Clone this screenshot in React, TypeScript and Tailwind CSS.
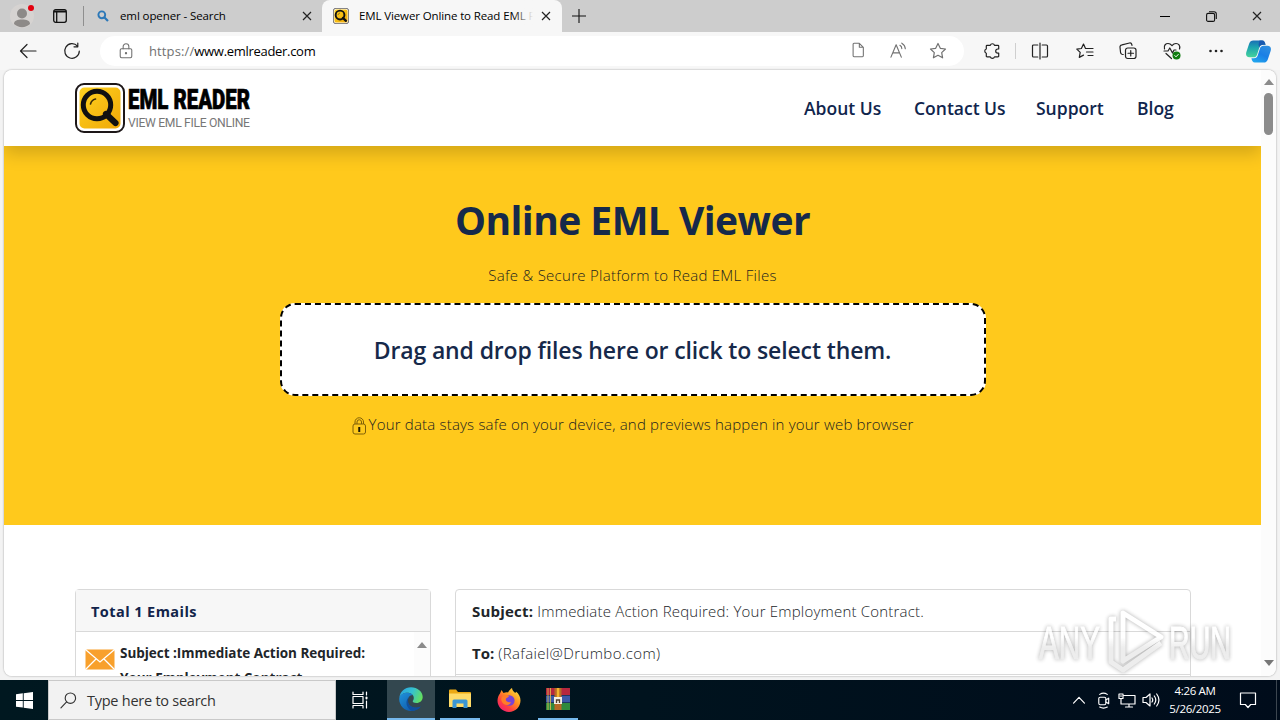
import React from "react";

const navLinks = [
  { label: "About Us", className: "w-[78px] mr-8" },
  { label: "Contact Us", className: "w-[90px] mr-8" },
  { label: "Support", className: "w-[69px] mr-8" },
  { label: "Blog", className: "w-[38px]" },
];

const Icon = ({
  size = 18,
  className = "",
  stroke = 1.2,
  children,
}: {
  size?: number;
  className?: string;
  stroke?: number;
  children: React.ReactNode;
}) => (
  <svg
    width={size}
    height={size}
    viewBox="0 0 18 18"
    fill="none"
    stroke="currentColor"
    strokeWidth={stroke}
    strokeLinecap="round"
    strokeLinejoin="round"
    className={`shrink-0 ${className}`}
  >
    {children}
  </svg>
);

const CloseIcon = () => (
  <svg width="10" height="10" viewBox="0 0 10 10" fill="none" stroke="#222" strokeWidth="1.2" className="shrink-0">
    <path d="M1 1l8 8M9 1l-8 8" />
  </svg>
);

const Magnifier = ({ size, id, ring = 4.6 }: { size: number; id: string; ring?: number }) => (
  <svg width={size} height={size} viewBox="0 0 50 50" className="shrink-0">
    <defs>
      <linearGradient id={id} x1="0" y1="0" x2="1" y2="1">
        <stop offset="0" stopColor="#ffd21f" />
        <stop offset="1" stopColor="#efa808" />
      </linearGradient>
    </defs>
    <rect x="1" y="1" width="48" height="48" rx="8" fill="#fff" stroke="#1d1718" strokeWidth="2" />
    <rect x="4.5" y="4.5" width="41" height="41" rx="5" fill={`url(#${id})`} />
    <circle cx="22" cy="22" r="13.7" fill="none" stroke="#111" strokeWidth={ring} />
    <path d="M31 31L40.500 40" stroke="#111" strokeWidth={ring + 1.2} strokeLinecap="round" />
    <path d="M15.500 21a7 7 0 015-5" fill="none" stroke="#3a2c08" strokeWidth="1.6" strokeLinecap="round" />
  </svg>
);

const TabStrip = () => (
  <div className="flex h-8 w-full bg-[#cdcdcd]">
    <div className="flex w-11 items-center justify-center">
      <svg width="26" height="24" viewBox="0 0 26 24">
        <circle cx="13" cy="12" r="12" fill="#d6d3d1" />
        <circle cx="13" cy="9.5" r="5" fill="#8d8a88" />
        <path d="M5 20c0-3.500 3.500-4.500 8-4.500s8 1 8 4.500c-2 2-5 3.200-8 3.200s-6-1.200-8-3.200z" fill="#8d8a88" />
        <circle cx="22" cy="4" r="3" fill="#e3000f" />
      </svg>
    </div>
    <div className="flex w-8 items-center justify-center">
      <svg width="14" height="14" viewBox="0 0 14 14" fill="none" stroke="#111" strokeWidth="1.3">
        <rect x=".7" y=".7" width="12.600" height="12.600" rx="2" />
        <path d="M1 2.500h12" strokeWidth="2" />
        <path d="M3.700 3v10" />
      </svg>
    </div>
    <div className="flex w-[246px] items-center pl-[7px]">
      <span className="h-5 w-px bg-[#8f8f8f]" />
      <svg width="12" height="12" viewBox="0 0 12 12" fill="none" stroke="#2c78b8" className="ml-[13px] shrink-0">
        <circle cx="4.800" cy="4.800" r="3.400" strokeWidth="1.900" />
        <path d="M7.500 7.500l3.500 3.500" strokeWidth="2.200" />
      </svg>
      <span className="ml-[11px] w-[182px] whitespace-nowrap text-[11.500px] leading-8 tracking-[-0.100px]">
        eml opener - Search
      </span>
      <CloseIcon />
    </div>
    <div className="flex w-60 items-center rounded-t-lg bg-[#f7f7f7] pl-[11px]">
      <Magnifier size={16} id="tabFill" ring={6} />
      <span className="relative ml-[10px] w-[174px] overflow-hidden whitespace-nowrap text-[11.500px] leading-8 tracking-[-0.120px]">
        EML Viewer Online to Read EML Files
        <span className="absolute right-0 top-0 h-8 w-5 bg-gradient-to-r from-[#f7f7f7]/0 to-[#f7f7f7]" />
      </span>
      <span className="ml-[8px] flex">
        <CloseIcon />
      </span>
    </div>
    <div className="flex w-[34px] items-center justify-center">
      <svg width="14" height="14" viewBox="0 0 14 14" stroke="#111" strokeWidth="1.100">
        <path d="M7 0v14M0 7h14" />
      </svg>
    </div>
    <div className="ml-auto flex">
      <div className="flex w-[46px] items-center justify-center">
        <span className="h-px w-[10px] bg-black" />
      </div>
      <div className="flex w-[46px] items-center justify-center">
        <svg width="11" height="11" viewBox="0 0 11 11" fill="none" stroke="#111" strokeWidth="1.100">
          <rect x=".6" y="2.400" width="8" height="8" rx="1.500" />
          <path d="M3 .7h5a2.300 2.300 0 012.300 2.300v5" />
        </svg>
      </div>
      <div className="flex w-[46px] items-center justify-center">
        <CloseIcon />
      </div>
    </div>
  </div>
);

const Toolbar = () => (
  <div className="flex h-[38px] w-full items-center bg-[#f7f7f7] text-[#222]">
    <div className="flex w-14 justify-center">
      <Icon>
        <path d="M17 9H1.500M8 2.500L1.500 9 8 15.500" />
      </Icon>
    </div>
    <div className="flex w-8 justify-center">
      <Icon>
        <path d="M16.300 9A7.300 7.300 0 1114.500 4.200M14.800 1v3.800H11" />
      </Icon>
    </div>
    <div className="ml-3 flex h-[30px] w-[864px] items-center rounded-full bg-white pl-[18px] text-[#717171]">
      <Icon size={16}>
        <rect x="2.500" y="6.500" width="13" height="10" rx="1.500" />
        <path d="M5.800 6.500V4a3.200 3.200 0 016.400 0v2.500" />
        <circle cx="9" cy="11.500" r=".7" fill="currentColor" />
      </Icon>
      <span className="ml-[15px] whitespace-nowrap pt-px text-[13px]">
        <span className="tracking-[0.120px]">https://</span>
        <span className="tracking-[-0.300px] text-black">www.emlreader.com</span>
      </span>
      <div className="ml-auto mr-[6px] flex">
        <div className="flex w-10 justify-center">
          <Icon size={16}>
            <path d="M3.500 2.500a1 1 0 011-1h6l4.500 4.500v9.500a1 1 0 01-1 1H4.500a1 1 0 01-1-1zM10.500 1.500V6H15" />
          </Icon>
        </div>
        <div className="flex w-10 justify-center">
          <Icon size={17}>
            <path d="M1 16L6.500 3 12 16M3 11.500h7M10.500 3.500q2 1.200 2 3.500M12.500 1.200q3.500 2 3.700 6" />
          </Icon>
        </div>
        <div className="flex w-10 justify-center">
          <Icon size={18}>
            <path d="M9 1.500l2.300 4.800 5.200.7-3.800 3.600.9 5.200L9 13.300l-4.600 2.500.9-5.200L1.500 7l5.200-.7z" />
          </Icon>
        </div>
      </div>
    </div>
    <div className="flex w-[51px] items-center justify-center pl-[4px]">
      <Icon>
        <path d="M4 3.300h3.300a2.200 2.200 0 014.200 0H15a.7.7 0 01.7.7v3h-.9a2.100 2.100 0 000 4.200h.9v3a.7.7 0 01-.7.700h-3.500a2.200 2.200 0 01-4.200 0H4a.7.7 0 01-.7-.7v-3a2.200 2.200 0 010-4.200V4a.7.7 0 01.7-.7z" />
      </Icon>
    </div>
    <span className="h-4 w-px bg-[#cfcfcf]" />
    <div className="flex w-[47px] justify-center">
      <Icon>
        <path d="M6.800 3H2.500a1 1 0 00-1 1v10a1 1 0 001 1h4.300M11.200 3h4.300a1 1 0 011 1v10a1 1 0 01-1 1h-4.300M9 1v16" />
      </Icon>
    </div>
    <div className="flex w-[43px] justify-center">
      <Icon>
        <path d="M11 6.500H9.500L7.500 2 5.400 6.500l-4.600.6 3.400 3.300-.9 5 4.200-2.300M11 6.500h6M10.500 10H17M12 13.500h5" />
      </Icon>
    </div>
    <div className="flex w-11 justify-center">
      <Icon>
        <rect x="6.500" y="6" width="10.500" height="10.500" rx="2.200" />
        <path d="M11.750 8.500v5.500M9 11.250h5.500M4.200 12.500A2.500 2.500 0 011.500 10L1 5.200A2.200 2.200 0 013 2.800L10.500 1a2 2 0 012.300 1.500l.2 1" />
      </Icon>
    </div>
    <div className="flex w-11 justify-center">
      <Icon>
        <path d="M1.500 7C.5 3 3 1.500 5 1.500c2 0 3.200 1.200 4 2.200.8-1 2-2.200 4-2.200 2.500 0 4.500 2 3.500 5.500M1 9h4l1.800-3 2.700 5 1.500-3h2M3 11.500l5.500 5" />
        <circle cx="13.500" cy="13.500" r="4" fill="#107c10" stroke="none" />
        <path d="M11.800 13.600l1.200 1.200 2.300-2.400" stroke="#fff" strokeWidth="1" />
      </Icon>
    </div>
    <div className="flex w-11 justify-center">
      <Icon>
        <g fill="currentColor" stroke="none">
          <circle cx="3.500" cy="9" r="1.300" />
          <circle cx="9" cy="9" r="1.300" />
          <circle cx="14.500" cy="9" r="1.300" />
        </g>
      </Icon>
    </div>
    <div className="flex w-[40px] justify-center">
      <svg width="25" height="23" viewBox="0 0 24 24" preserveAspectRatio="none">
        <defs>
          <linearGradient id="copA" x1="0.300" y1="0" x2="0.300" y2="1">
            <stop offset="0" stopColor="#1a6fb5" />
            <stop offset=".4" stopColor="#1ca3b0" />
            <stop offset="1" stopColor="#45d39c" />
          </linearGradient>
          <linearGradient id="copB" x1=".8" y1="0" x2=".2" y2="1">
            <stop offset="0" stopColor="#2f8fe0" />
            <stop offset=".5" stopColor="#1a7fe6" />
            <stop offset="1" stopColor="#22a7ee" />
          </linearGradient>
        </defs>
        <path d="M7 .5h8.500c2 0 2.800 2 3.300 4.500h-2.300c-2.200 0-3.200 1-3.800 3l-2 7c-.7 2-1.700 3-3.700 3H3.500C0 18-.5 15 .5 12L3 4C3.800 1.500 5 .5 7 .5z" fill="url(#copA)" />
        <path d="M13 .5h2.500c2 0 2.800 2 3.300 4.500h-2.300c-2.200 0-3.200 1-3.800 3L12 5z" fill="#1959b0" />
        <path d="M17 23.500H8.500c-2 0-2.800-2-3.300-4.500h2.300c2.200 0 3.200-1 3.800-3l2-7c.7-2 1.700-3 3.700-3h3.500C24 6 24.500 9 23.500 12L21 20c-.8 2.500-2 3.500-4 3.500z" fill="url(#copB)" />
      </svg>
    </div>
  </div>
);

const SiteHeader = () => (
  <header className="relative z-10 flex h-[76px] items-center bg-white pl-[71px] pr-[86px] shadow-[0_8px_16px_rgba(0,0,0,0.17)]">
    <Magnifier size={50} id="logoFill" ring={5} />
    <svg width="126" height="60" viewBox="0 -6 126 60" className="ml-[3px] overflow-visible">
      <text
        x="0"
        y="25"
        fontFamily="Roboto"
        fontWeight="900"
        fontSize="28.500"
        stroke="#000"
        strokeWidth=".7"
        textLength="122"
        lengthAdjust="spacingAndGlyphs"
      >
        EML READER
      </text>
      <text x="0" y="43" fontFamily="Roboto" fontSize="12.200" fill="#777" textLength="122">
        VIEW EML FILE ONLINE
      </text>
    </svg>
    <nav className="ml-auto flex pt-px text-[17.500px] font-semibold text-[#10254d]">
      {navLinks.map((link) => (
        <a key={link.label} className={`whitespace-nowrap ${link.className}`}>
          {link.label}
        </a>
      ))}
    </nav>
  </header>
);

const Hero = () => (
  <section className="flex h-[379px] flex-col items-center bg-[#ffc91c] text-[#16294a]">
    <h1 className="mt-[44px] whitespace-nowrap text-[39px] font-bold leading-[60px] tracking-[-0.550px]">
      Online EML Viewer
    </h1>
    <p className="mt-[13px] whitespace-nowrap text-[15px] font-light leading-6 tracking-[0.280px] text-[#1a1c1f]">
      Safe &amp; Secure Platform to Read EML Files
    </p>
    <div className="mt-4 flex h-[93px] w-[706px] items-center justify-center rounded-[15px] border-2 border-dashed border-black bg-white pt-px">
      <span className="whitespace-nowrap text-[23px] font-semibold tracking-[-0.130px]">
        Drag and drop files here or click to select them.
      </span>
    </div>
    <p className="mt-[16px] flex items-center whitespace-nowrap text-[15px] font-light leading-6 tracking-[0.190px] text-[#1a1c1f]">
      <svg width="15" height="18" viewBox="0 0 15 18" fill="none" stroke="#806008" className="mr-[2px] mt-[3px]">
        <rect x="1" y="7" width="12.500" height="10" rx="2" />
        <path d="M3 7V5a4.200 4.200 0 018.500 0v2M5 7V5a2.200 2.200 0 014.500 0v2" />
        <path d="M7.250 10v5" stroke="#1e1804" strokeWidth="2" />
      </svg>
      <span>Your data stays safe on your device, and previews happen in your web browser</span>
    </p>
  </section>
);

const Mails = () => (
  <section className="flex h-[151px] items-start gap-6 bg-white pl-[71px] pt-16 text-[#212529]">
    <div className="h-[200px] w-[356px] rounded-t border border-[#d9d9d9]">
      <div className="h-[42px] border-b border-[#d9d9d9] bg-[#f7f7f7] pl-[15px] text-[14.500px] font-bold leading-[43px] tracking-[0.430px] text-[#12244a]">
        Total 1 Emails
      </div>
      <div className="flex">
        <svg width="30" height="21" viewBox="0 0 30 21" className="ml-[9px] mt-[17px] shrink-0">
          <rect x=".5" y=".5" width="29" height="20" rx="1.500" fill="#f8a02c" />
          <path d="M1 1l14 12L29 1M1 20l10-10M29 20L19 10" fill="none" stroke="#fff" strokeWidth="1.300" />
        </svg>
        <p className="ml-[5px] mt-[9px] w-[290px] whitespace-nowrap text-[13.500px] font-bold leading-[25px] tracking-[-0.030px]">
          Subject :Immediate Action Required:
          <br />
          Your Employment Contract.
        </p>
        <div className="ml-auto flex w-[16px] justify-center bg-[#fcfcfc] pt-[10px]">
          <svg width="10" height="6" viewBox="0 0 10 6">
            <path d="M5 0l5 6H0z" fill="#8b8b8b" />
          </svg>
        </div>
      </div>
    </div>
    <div className="h-[200px] w-[736px] whitespace-nowrap rounded-t border border-[#d9d9d9] text-[15px] font-light">
      <div className="h-[42px] border-b border-[#d9d9d9] pl-4 leading-[43px] tracking-[0.200px]">
        <b className="font-bold">Subject:</b> Immediate Action Required: Your Employment Contract.
      </div>
      <div className="h-[43px] border-b border-[#d9d9d9] pl-4 leading-[43px]">
        <b className="font-bold">To:</b> <span className="tracking-[0.380px]">(Rafaiel@Drumbo.com)</span>
      </div>
    </div>
  </section>
);

const Scrollbar = () => (
  <div className="flex w-[15px] flex-col items-center bg-[#fcfcfc]">
    <svg width="10" height="6" viewBox="0 0 10 6" className="mt-[9px]">
      <path d="M5 0l5 6H0z" fill="#8b8b8b" />
    </svg>
    <span className="mt-[8px] h-[42px] w-[9px] rounded-full bg-[#8b8b8b]" />
    <svg width="10" height="6" viewBox="0 0 10 6" className="mb-[10px] mt-auto">
      <path d="M5 6l5-6H0z" fill="#777" />
    </svg>
  </div>
);

const Taskbar = () => (
  <div className="flex h-10 w-full items-stretch bg-gradient-to-r from-[#001820] via-[#00131e] to-[#000c1b] text-white">
    <div className="flex w-12 items-center justify-center">
      <svg width="17" height="17" viewBox="0 0 17 17" fill="#fff">
        <path d="M0 2.300l6.800-1V8H0zM7.700 1.200L17 0v8H7.700zM0 8.900h6.800v6.700L0 14.700zM7.700 8.900H17V17l-9.300-1.200z" />
      </svg>
    </div>
    <div className="flex w-72 items-center border border-[#c9c9c9] bg-[#f2f2f2] pl-[11px] text-[#333]">
      <Icon size={17}>
        <circle cx="11" cy="6.500" r="5.500" />
        <path d="M7 10.500L1 16.800" />
      </Icon>
      <span className="ml-[10px] whitespace-nowrap pt-px text-[14.500px] tracking-[-0.250px]">Type here to search</span>
    </div>
    <div className="flex w-[51px] items-center justify-center pr-[3px]">
      <Icon size={18} stroke={1.2}>
        <path d="M2 1v2.500h10V1M2 17v-2.500h10V17M15.500 1v3M15.500 10v7" />
        <rect x="2" y="5.500" width="10" height="7" />
        <path d="M15.500 6.500v1" strokeWidth="2" />
      </Icon>
    </div>
    <div className="flex w-12 items-center justify-center border-b-2 border-[#76b9ed] bg-[#33474f]">
      <svg width="24" height="24" viewBox="0 0 24 24">
        <defs>
          <linearGradient id="edgeTop" x1="0" y1=".3" x2="1" y2=".6">
            <stop offset="0" stopColor="#2aa5df" />
            <stop offset=".5" stopColor="#35c1d0" />
            <stop offset="1" stopColor="#66e05a" />
          </linearGradient>
          <linearGradient id="edgeBase" x1="0" y1="0" x2="1" y2="1">
            <stop offset="0" stopColor="#1f93dc" />
            <stop offset="1" stopColor="#0c4a9c" />
          </linearGradient>
        </defs>
        <path d="M.3 11C1 4.500 5.800.2 12 .2c6.500 0 11.700 4.500 11.700 9.800 0 3.700-2.900 6-6.200 6-2.700 0-3.800-.9-3.800-1.700 0-.8 1.100-1.200 1.100-3.300C14.800 8 12 5.800 8.200 5.800 4.500 5.800 1.500 8 .3 11z" fill="url(#edgeTop)" />
        <path d="M.2 12C.2 8.500 4 5.800 8.200 5.800c2.200 0 4.300.8 5.500 2.200-3 0-5 2.800-5 6 0 4.200 4.200 6.800 8.300 6.800 2 0 3.500-.6 4.800-1.300C19.600 22.300 16 24 12 24 5.500 24 .2 18.500.2 12z" fill="url(#edgeBase)" />
        <path d="M9.500 10.500c-3.500 3.500-2.500 10.500 3.500 13.400 3.700-.2 7-1.900 8.800-4.400-5 2.500-11.500.5-12.500-4-.4-2-.2-3.500.2-5z" fill="#104f9d" />
      </svg>
    </div>
    <div className="ml-[5px] flex w-10 items-center justify-center border-b-2 border-[#76b9ed]">
      <svg width="22" height="20" viewBox="0 0 22 20">
        <path d="M0 1.500A1 1 0 011 .5h6l2 2.500h12a1 1 0 011 1V18H0z" fill="#eca914" />
        <path d="M0 4.500h22V18H0z" fill="#ffdb68" />
        <path d="M3.500 19v-7a1.500 1.500 0 011.500-1.500h12a1.500 1.500 0 011.500 1.500v7h-4v-4.500h-7V19z" fill="#3a96d5" />
      </svg>
    </div>
    <div className="ml-[4px] flex w-[50px] items-center justify-center">
      <svg width="24" height="24" viewBox="0 0 24 24">
        <defs>
          <linearGradient id="fox" x1="1" y1="0" x2=".2" y2="1">
            <stop offset="0" stopColor="#fff04a" />
            <stop offset=".45" stopColor="#ff9320" />
            <stop offset=".75" stopColor="#ff4040" />
            <stop offset="1" stopColor="#ee1c75" />
          </linearGradient>
        </defs>
        <path d="M3 5.500L4.500 2l2 3c1.600-.6 3-.8 4.500-.5C12 2.500 13.500 1 15 0c.2 2.500 2 3.500 3.200 5l1-1.200C22 6 23.500 9.200 23.500 12.500 23.500 19 18.300 24 12 24S.5 19 .5 12.800C.5 9.800 1.500 7.500 3 5.500z" fill="url(#fox)" />
        <circle cx="12.300" cy="12.500" r="5.300" fill="#7843d6" />
        <path d="M5 9c2-2.500 5-2.800 7-.5l-3 2c-1 3 2.500 4.500 5 3.500-1 4-7 4-9 0-1-2-1-3.500 0-5z" fill="#ff7d27" />
      </svg>
    </div>
    <div className="ml-[4px] flex w-10 items-center justify-center border-b-2 border-[#76b9ed]">
      <svg width="24" height="22" viewBox="0 0 24 22">
        <path d="M0 0h24v7H0z" fill="#b5273e" />
        <path d="M0 7.500h24v7H0z" fill="#3b58a8" />
        <path d="M0 15h24v7H0z" fill="#2f8a3e" />
        <path d="M2 0v22M4.500 0v22" stroke="#e5c04e" strokeWidth=".8" />
        <path d="M8.500 0h7v22h-7z" fill="#b66a26" />
        <path d="M10.800 0h2.500v9h-2.500z" fill="#f4b52c" />
        <path d="M8 9h8v7H8z" fill="#f4eee2" />
        <path d="M10.500 15v-3h3v3" fill="none" stroke="#56402c" strokeWidth="1.300" />
      </svg>
    </div>
    <div className="ml-auto flex items-center">
      <div className="flex w-6 justify-center">
        <Icon size={14} stroke={1.5}>
          <path d="M2 13l7-7.500 7 7.500" />
        </Icon>
      </div>
      <div className="flex w-6 justify-center">
        <Icon size={17}>
          <rect x="4" y="5.500" width="7.500" height="8" rx="1.500" />
          <path d="M11.500 8.500l3-2v6l-3-2M5 2.500q4-2.500 8 0M5 16q4 2.200 8 0" />
        </Icon>
      </div>
      <div className="flex w-6 justify-center">
        <Icon size={18}>
          <path d="M6 4.500h11v8.500H6M1 3h4v4.500H1zM3 7.500V13h3M11 13v3M7.500 16h7M2.500 5h1" />
        </Icon>
      </div>
      <div className="flex w-6 justify-center">
        <Icon size={18}>
          <path d="M1 6.500h3L8 3v12l-4-3.500H1zM10 7q1.500 2 0 4M12.300 5q3 4 0 8M14.700 3q4.500 6 0 12" />
        </Icon>
      </div>
      <div className="ml-[4px] flex w-[56px] flex-col items-center whitespace-nowrap text-[11.500px] leading-[18px] tracking-[-0.350px]">
        <span>4:26 AM</span>
        <span>5/26/2025</span>
      </div>
      <div className="flex w-[53px] items-center justify-center pr-[3px]">
        <Icon>
          <path d="M1.500 2h15v11.500h-4.800L9 16.500l-2.700-3H1.500z" />
        </Icon>
      </div>
      <span className="mr-[3px] h-10 w-px bg-[#3c4650]" />
    </div>
  </div>
);

const Watermark = () => (
  <svg
    width="210"
    height="74"
    viewBox="0 0 210 74"
    className="absolute left-[1035px] top-[606px] overflow-visible opacity-80 drop-shadow-[0_0_2px_rgba(0,0,0,0.4)]"
  >
    <defs>
      <linearGradient id="markFill" x1="0" y1="0" x2="0" y2="70" gradientUnits="userSpaceOnUse">
        <stop offset=".45" stopColor="#fff" />
        <stop offset=".6" stopColor="#e9e9e9" />
      </linearGradient>
    </defs>
    <g fill="url(#markFill)" stroke="url(#markFill)" strokeWidth="1" fontFamily="Liberation Sans" fontSize="47">
      <text x="4" y="53" textLength="61" lengthAdjust="spacingAndGlyphs">
        ANY
      </text>
      <text x="134" y="53" textLength="62" lengthAdjust="spacingAndGlyphs">
        RUN
      </text>
    </g>
    <path
      d="M88 7L126 31 88 55zM81 13h-5v43l12 8 38-27"
      fill="none"
      stroke="url(#markFill)"
      strokeWidth="5"
      strokeLinejoin="round"
    />
  </svg>
);

const App = () => (
  <div className="relative flex h-[720px] w-[1280px] flex-col overflow-hidden bg-[#f3f3f3] font-['Open_Sans','Noto_Sans',sans-serif] text-black">
    <TabStrip />
    <Toolbar />
    <main className="ml-1 flex h-[606px] w-[1272px] overflow-hidden rounded-lg bg-white shadow-[0_0_2px_rgba(0,0,0,0.4)]">
      <div className="w-[1257px] shrink-0 overflow-hidden">
        <SiteHeader />
        <Hero />
        <Mails />
      </div>
      <Scrollbar />
    </main>
    <div className="h-1 w-full shrink-0" />
    <Taskbar />
    <Watermark />
  </div>
);

export default App;
